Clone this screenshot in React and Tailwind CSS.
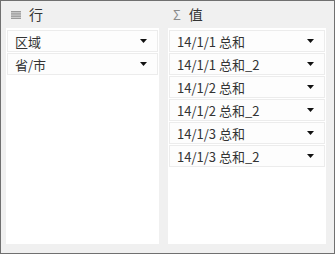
import { useState } from "react";

const rows = ["区域", "省/市"];
const values = [
  "14/1/1 总和",
  "14/1/1 总和_2",
  "14/1/2 总和",
  "14/1/2 总和_2",
  "14/1/3 总和",
  "14/1/3 总和_2",
];

function Caret() {
  return (
    <svg width="7" height="4" viewBox="0 0 7 4" className="shrink-0">
      <path d="M0 0 H7 L3.5 4 Z" fill="#111" />
    </svg>
  );
}

function LinesIcon() {
  return (
    <svg width="10" height="8" viewBox="0 0 10 8">
      <rect x="0" y="0" width="10" height="1.5" fill="#9a9a9a" />
      <rect x="0" y="2.2" width="10" height="1.5" fill="#9a9a9a" />
      <rect x="0" y="4.4" width="10" height="1.5" fill="#9a9a9a" />
      <rect x="0" y="6.6" width="10" height="1.4" fill="#9a9a9a" />
    </svg>
  );
}

function Pill({ label }) {
  return (
    <div className="h-[22px] border border-[#ececec] bg-[#fdfdfd] flex items-center justify-between pl-[7px] pr-[10px]">
      <span className="text-[13px] text-[#333] leading-none">{label}</span>
      <Caret />
    </div>
  );
}

function Column({ icon, title, items, width }) {
  return (
    <div className={`flex flex-col ${width}`}>
      <div className="h-[27px] flex items-center gap-[8px] pl-[5px]">
        {icon}
        <span className="text-[14px] text-[#333]">{title}</span>
      </div>
      <div className="flex-1 bg-white px-[1px] pt-[2px] flex flex-col gap-[1px]">
        {items.map((it) => (
          <Pill key={it} label={it} />
        ))}
      </div>
    </div>
  );
}

export default function App() {
  const [rowItems] = useState(rows);
  const [valueItems] = useState(values);

  return (
    <div
      className="w-[335px] h-[254px] border border-[#707070] bg-[#f0f0f0] flex gap-[9px] pl-[5px] pr-[8px] pb-[9px]"
      style={{ fontFamily: '"Noto Sans CJK SC", "Liberation Sans", sans-serif' }}
    >
      <Column icon={<LinesIcon />} title="行" items={rowItems} width="w-[153px]" />
      <Column
        icon={<span className="text-[13px] text-[#8a8a8a] leading-none">Σ</span>}
        title="值"
        items={valueItems}
        width="w-[158px]"
      />
    </div>
  );
}
